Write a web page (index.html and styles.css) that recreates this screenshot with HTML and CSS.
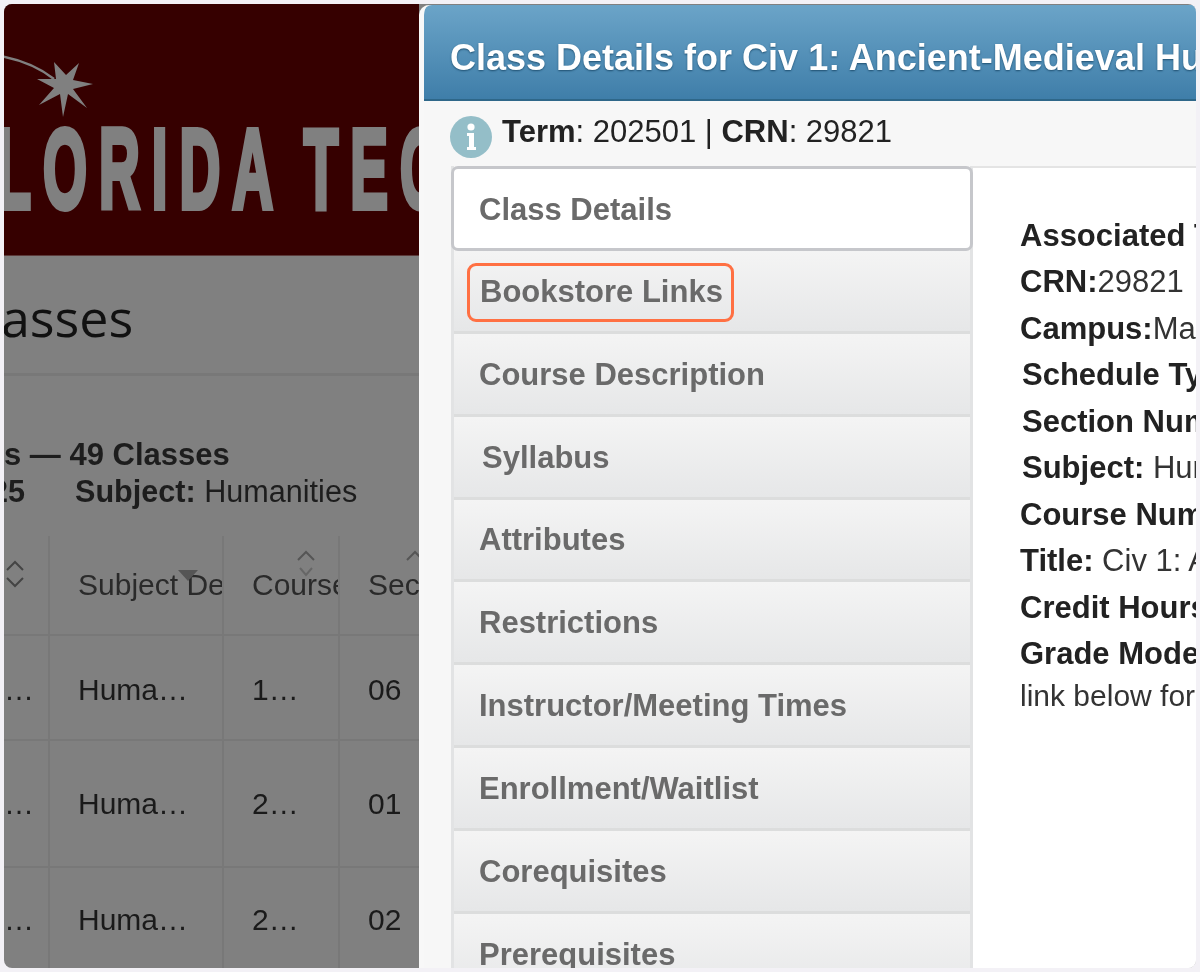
FILE: index.html
```html
<!DOCTYPE html>
<html lang="en">
<head>
    <meta charset="UTF-8">
    <title>Class Details</title>
    <link rel="stylesheet" href="styles.css">
</head>
<body>
<div class="frame">
    <section class="page">
        <header class="banner">
            <svg class="star" width="100" height="125" viewBox="0 0 100 125">
                <path d="M0 52 C22 56 40 64 54 75" fill="none" stroke="#808080" stroke-width="2.5"/>
                <polygon fill="#808080" points="54,58 66,71 79,59 73,76 93,80 73,85 87,104 68,90 63,113 60,90 39,101 54,84 37,75 56,75"/>
            </svg>
            <div class="wordmark">FLORIDA TECH</div>
        </header>
        <div class="heading"><h1>Classes</h1></div>
        <div class="summary">
            <div class="summary-title">Classes — 49 Classes</div>
            <div class="summary-meta"><span class="term">25</span><span><b>Subject:</b> Humanities</span></div>
        </div>
        <div class="table">
            <div class="cell head">
                <svg class="sort sort-first" width="22" height="32" viewBox="0 0 22 32"><path d="M3 12 L11 4 L19 12 M3 20 L11 28 L19 20" fill="none" stroke="#444" stroke-width="2"/></svg>
            </div>
            <div class="cell head">Subject De
                <svg class="sort sort-tri" width="20" height="12" viewBox="0 0 20 12"><polygon points="0,0 20,0 10,11" fill="#555"/></svg>
            </div>
            <div class="cell head">Course
                <svg class="sort sort-course" width="22" height="32" viewBox="0 0 22 32"><path d="M3 12 L11 4 L19 12" fill="none" stroke="#555" stroke-width="2"/><path d="M5 20 L11 27 L17 20" fill="none" stroke="#666" stroke-width="2"/></svg>
            </div>
            <div class="cell head last">Section
                <svg class="sort sort-sec" width="22" height="32" viewBox="0 0 22 32"><path d="M3 12 L11 4 L19 12" fill="none" stroke="#555" stroke-width="2"/></svg>
            </div>

            <div class="cell row1 dots">…</div><div class="cell row1">Huma…</div><div class="cell row1">1…</div><div class="cell row1 last">06</div>
            <div class="cell row2 dots">…</div><div class="cell row2">Huma…</div><div class="cell row2">2…</div><div class="cell row2 last">01</div>
            <div class="cell row3 dots">…</div><div class="cell row3">Huma…</div><div class="cell row3">2…</div><div class="cell row3 last">02</div>
        </div>
    </section>

    <aside class="modal">
        <h2 class="modal-title">Class Details for Civ 1: Ancient-Medieval Humanities</h2>
        <div class="modal-info">
            <svg width="44" height="44" viewBox="0 0 44 44">
                <circle cx="22" cy="22" r="21" fill="#94bec8"/>
                <circle cx="22" cy="12" r="3.6" fill="#fff"/>
                <path d="M18 18 H25 V32 H27 V35 H18 V32 H20 V21 H18 Z" fill="#fff"/>
            </svg>
            <p><b>Term</b>: 202501 | <b>CRN</b>: 29821</p>
        </div>
        <div class="modal-body">
            <nav class="tabs">
                <a class="tab current">Class Details</a>
                <a class="tab"><span class="marked">Bookstore Links</span></a>
                <a class="tab">Course Description</a>
                <a class="tab nudge">Syllabus</a>
                <a class="tab">Attributes</a>
                <a class="tab">Restrictions</a>
                <a class="tab">Instructor/Meeting Times</a>
                <a class="tab">Enrollment/Waitlist</a>
                <a class="tab">Corequisites</a>
                <a class="tab">Prerequisites</a>
            </nav>
            <div class="details">
                <p><b>Associated Term:</b> 202501</p>
                <p><b>CRN:</b>29821</p>
                <p><b>Campus:</b>Main</p>
                <p class="nudge"><b>Schedule Type:</b> Lecture</p>
                <p class="nudge"><b>Section Number:</b> 06</p>
                <p class="nudge"><b>Subject:</b> Humanities</p>
                <p><b>Course Number:</b> 1</p>
                <p><b>Title:</b> Civ 1: Ancient-Medieval</p>
                <p><b>Credit Hours:</b> 3</p>
                <p><b>Grade Mode:</b> Normal</p>
                <p class="small">link below for more</p>
            </div>
        </div>
    </aside>
</div>
</body>
</html>
```

FILE: styles.css
```css
* {
    box-sizing: border-box;
}

html, body {
    height: 972px;
    margin: 0;
    overflow: hidden;
}

body {
    background-color: #f3f1f6;
    padding: 4px;
    font-family: "Liberation Sans", Arial, sans-serif;
}

.frame {
    display: flex;
    height: 964px;
    border-radius: 8px;
    overflow: hidden;
    background-color: #808080;
    filter: blur(0.6px);
}

/* dimmed page behind the dialog */
.page {
    width: 415px;
    flex: none;
    overflow: hidden;
    color: #1d1d1d;
}

.banner {
    height: 252px;
    overflow: hidden;
    background-color: #360000;
    border-bottom: 1px solid #5c3a3a;
    position: relative;
}

.star {
    position: absolute;
    left: -4px;
    top: 0;
}

.wordmark {
    margin: 100px 0 0 -54px;
    width: 800px;
    color: #808080;
    font-size: 113px;
    line-height: 130px;
    font-weight: bold;
    letter-spacing: 24px;
    word-spacing: -14px;
    white-space: nowrap;
    -webkit-text-stroke: 6px #808080;
    transform: scaleX(0.5);
    transform-origin: left top;
}

.heading {
    height: 120px;
    border-bottom: 3px solid #787878;
    overflow: hidden;
}

.heading h1 {
    margin: 31px 0 0 -49px;
    font-family: "Open Sans", sans-serif;
    font-size: 52px;
    line-height: 60px;
    font-weight: normal;
    color: #111;
}

.summary {
    height: 160px;
    padding-top: 61px;
    font-size: 31px;
    line-height: 36px;
    white-space: nowrap;
}

.summary-title {
    font-weight: bold;
    margin-left: -100px;
}

.summary-meta {
    display: flex;
    gap: 50px;
    margin-left: -1px;
    font-size: 30.6px;
}

.term {
    font-weight: bold;
    width: 22px;
    overflow: hidden;
    direction: rtl;
}

.table {
    display: grid;
    grid-template-columns: 46px 174px 116px 1fr;
    grid-template-rows: 100px 105px 127px 104px;
    font-size: 30px;
}

.cell {
    position: relative;
    display: flex;
    align-items: center;
    padding-left: 28px;
    overflow: hidden;
    white-space: nowrap;
    border-right: 2px solid #787878;
    border-bottom: 2px solid #787878;
    color: #1a1a1a;
}

.cell:nth-child(-n+4) {
    color: #2a2a2a;
}

.cell.last {
    border-right: none;
}

.row1 {
    padding-top: 4px;
}

.row3 {
    border-bottom: none;
}

.cell.dots {
    padding-left: 0;
}

.sort {
    position: absolute;
}

.sort-first {
    left: 0;
    top: 22px;
}

.sort-tri {
    left: 128px;
    top: 34px;
}

.sort-course {
    left: 71px;
    top: 12px;
}

.sort-sec {
    left: 64px;
    top: 12px;
}

/* dialog */
.modal {
    flex: 1;
    min-width: 0;
    overflow: hidden;
    background-color: #f7f7f7;
    border-left: 5px solid #f8f8f8;
    border-top-left-radius: 10px;
    margin-top: 1px;
}

.modal-title {
    margin: 0;
    height: 96px;
    padding: 31px 0 0 26px;
    overflow: hidden;
    white-space: nowrap;
    font-size: 36px;
    line-height: 44px;
    color: #fff;
    text-shadow: 0 1px 2px #1f4f70;
    background: linear-gradient(#6ba4c8, #3f7ea9);
    border-bottom: 2px solid #2e6789;
    border-top-left-radius: 8px;
}

.modal-info {
    display: flex;
    align-items: center;
    gap: 9px;
    height: 65px;
    padding: 6px 0 0 25px;
    font-size: 31px;
    color: #222;
}

.modal-info p {
    margin: 0 0 10px;
}

.modal-body {
    display: flex;
    padding-left: 27px;
    height: 810px;
}

.tabs {
    width: 522px;
    flex: none;
    border-left: 3px solid #e2e3e4;
    border-right: 3px solid #e2e3e4;
}

.tab {
    display: flex;
    align-items: center;
    height: 82.85px;
    padding: 2px 0 0 25px;
    font-size: 31px;
    font-weight: bold;
    color: #6a6a6a;
    background: linear-gradient(#f4f4f4, #e6e7e8);
    border-bottom: 3px solid #dcdddd;
}

.tab.current {
    height: 85px;
    margin: 0 -3px;
    padding-left: 25px;
    background: #fff;
    border: 3px solid #c6c7cb;
    border-radius: 7px;
}

.tab.nudge {
    padding-left: 28px;
}

.marked {
    margin: 2px 0 0 -12px;
    padding: 8px 8px 9px 10px;
    border: 3px solid #ff7043;
    border-radius: 9px;
}

.details {
    flex: 1;
    min-width: 0;
    overflow: hidden;
    background-color: #fff;
    border-top: 2px solid #e4e4e4;
    padding: 44.6px 0 0 47px;
    white-space: nowrap;
    font-size: 31px;
    color: #333;
}

.details p {
    margin: 0;
    height: 46.5px;
    line-height: 46.5px;
}

.details b {
    color: #222;
}

.details p.nudge {
    padding-left: 2px;
}

.details p.small {
    height: 36px;
    line-height: 36px;
    font-size: 30px;
}
```
